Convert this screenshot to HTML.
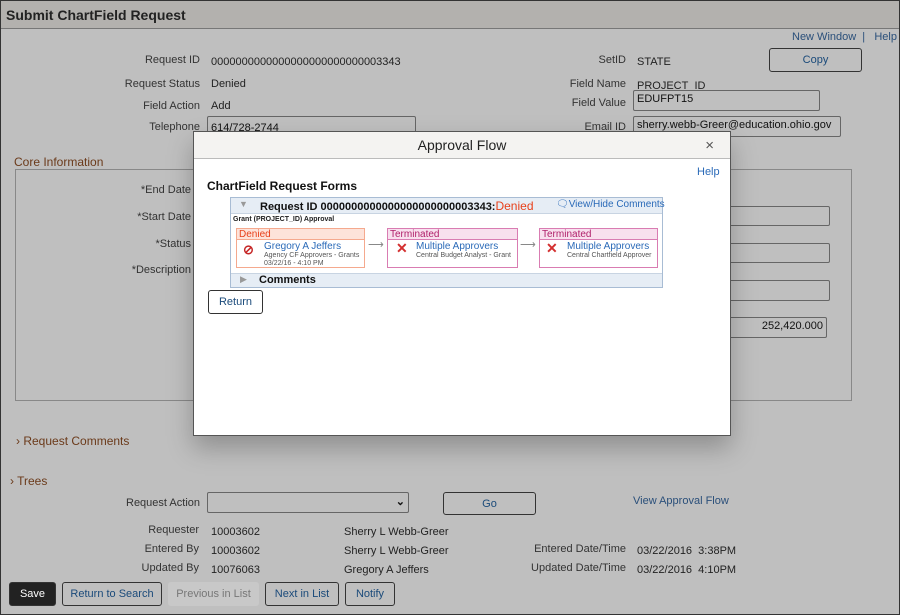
<!DOCTYPE html>
<html><head><meta charset="utf-8"><style>
*{box-sizing:border-box;margin:0;padding:0}
body{width:900px;height:615px;overflow:hidden;background:#bfbfbf;font-family:"Liberation Sans",Arial,sans-serif;font-size:11px;color:#222;position:relative}
.a{position:absolute;white-space:nowrap}
.frame{position:absolute;left:0;top:0;width:900px;height:615px;border:1px solid #333;z-index:5;pointer-events:none}
.tb{position:absolute;left:1px;top:1px;width:898px;height:28px;background:#b3b1ae;border-bottom:1px solid #777}
.lbl{position:absolute;text-align:right;color:#333}
.inp{position:absolute;border:1px solid #666;border-radius:2px;background:#bfbfbf;padding:2px 3px;font-size:11px;color:#111}
.btn{position:absolute;border:1px solid #333;border-radius:3px;text-align:center;color:#1a4a7a;font-size:11px}
.lnk{color:#2a4f7a}
.br{color:#6b3a1a;font-size:12px}
.m{position:absolute;left:193px;top:131px;width:538px;height:305px;background:#fff;border:1px solid #555;box-shadow:0 12px 24px rgba(0,0,0,.25)}
.mh{height:27px;background:#f4f3f1;border-bottom:1px solid #bbb;text-align:center;font-size:14px;line-height:27px;color:#222}
.step{position:absolute;top:14px;height:40px;background:#fff}
.step .h{height:11px;font-size:10px;line-height:11px;padding-left:2px}
.blue{color:#2a6ab8}
</style></head><body>
<div class="frame"></div>
<div class="tb"></div>
<div class="a" style="left:6px;top:7px;font-size:14px;font-weight:bold;color:#222">Submit ChartField Request</div>
<div class="a lnk" style="left:792px;top:31px">New Window &nbsp;| &nbsp; Help &nbsp;|</div>

<div class="lbl" style="left:80px;top:54px;width:120px">Request ID</div>
<div class="a" style="left:211px;top:56px">0000000000000000000000000003343</div>
<div class="lbl" style="left:80px;top:78px;width:120px">Request Status</div>
<div class="a" style="left:211px;top:78px">Denied</div>
<div class="lbl" style="left:80px;top:100px;width:120px">Field Action</div>
<div class="a" style="left:211px;top:100px">Add</div>
<div class="lbl" style="left:80px;top:121px;width:120px">Telephone</div>
<div class="inp" style="left:207px;top:116px;width:209px;height:18px;padding-top:5px">614/728-2744</div>

<div class="lbl" style="left:520px;top:54px;width:106px">SetID</div>
<div class="a" style="left:637px;top:56px">STATE</div>
<div class="btn" style="left:769px;top:48px;width:93px;height:24px;line-height:22px">Copy</div>
<div class="lbl" style="left:520px;top:78px;width:106px">Field Name</div>
<div class="a" style="left:637px;top:80px">PROJECT_ID</div>
<div class="lbl" style="left:520px;top:97px;width:106px">Field Value</div>
<div class="inp" style="left:633px;top:90px;width:187px;height:21px">EDUFPT15</div>
<div class="lbl" style="left:520px;top:121px;width:106px">Email ID</div>
<div class="inp" style="left:633px;top:116px;width:208px;height:21px">sherry.webb-Greer@education.ohio.gov</div>

<div class="a br" style="left:14px;top:155px">Core Information</div>
<div class="a" style="left:15px;top:169px;width:837px;height:232px;border:1px solid #888"></div>
<div class="lbl" style="left:80px;top:184px;width:111px">*End Date</div>
<div class="lbl" style="left:80px;top:211px;width:111px">*Start Date</div>
<div class="lbl" style="left:80px;top:238px;width:111px">*Status</div>
<div class="lbl" style="left:80px;top:264px;width:111px">*Description</div>
<div class="inp" style="left:700px;top:206px;width:130px;height:20px"></div>
<div class="inp" style="left:700px;top:243px;width:130px;height:20px"></div>
<div class="inp" style="left:700px;top:280px;width:130px;height:21px"></div>
<div class="inp" style="left:700px;top:317px;width:127px;height:21px;text-align:right">252,420.000</div>

<div class="a br" style="left:16px;top:434px">&#8250; Request Comments</div>
<div class="a br" style="left:10px;top:474px">&#8250; Trees</div>
<div class="lbl" style="left:80px;top:497px;width:120px">Request Action</div>
<div class="inp" style="left:207px;top:492px;width:202px;height:21px;text-align:right;font-weight:bold">&#8964;</div>
<div class="btn" style="left:443px;top:492px;width:93px;height:23px;line-height:22px">Go</div>
<div class="a lnk" style="left:633px;top:495px">View Approval Flow</div>
<div class="lbl" style="left:80px;top:524px;width:119px">Requester</div>
<div class="a" style="left:211px;top:526px">10003602</div>
<div class="a" style="left:344px;top:526px">Sherry L Webb-Greer</div>
<div class="lbl" style="left:80px;top:543px;width:119px">Entered By</div>
<div class="a" style="left:211px;top:545px">10003602</div>
<div class="a" style="left:344px;top:545px">Sherry L Webb-Greer</div>
<div class="lbl" style="left:500px;top:543px;width:126px">Entered Date/Time</div>
<div class="a" style="left:637px;top:545px">03/22/2016 &nbsp;3:38PM</div>
<div class="lbl" style="left:80px;top:562px;width:119px">Updated By</div>
<div class="a" style="left:211px;top:564px">10076063</div>
<div class="a" style="left:344px;top:564px">Gregory A Jeffers</div>
<div class="lbl" style="left:500px;top:562px;width:126px">Updated Date/Time</div>
<div class="a" style="left:637px;top:564px">03/22/2016 &nbsp;4:10PM</div>

<div class="btn" style="left:9px;top:582px;width:47px;height:24px;line-height:22px;background:#222;color:#fff">Save</div>
<div class="btn" style="left:62px;top:582px;width:100px;height:24px;line-height:22px">Return to Search</div>
<div class="btn" style="left:168px;top:582px;width:91px;height:24px;line-height:22px;background:#c8c8c8;border-color:#c8c8c8;color:#777">Previous in List</div>
<div class="btn" style="left:265px;top:582px;width:74px;height:24px;line-height:22px">Next in List</div>
<div class="btn" style="left:345px;top:582px;width:50px;height:24px;line-height:22px">Notify</div>

<div class="m">
 <div class="mh">Approval Flow<span style="position:absolute;right:16px;font-size:15px;color:#555">&#215;</span></div>
 <div class="a blue" style="left:503px;top:34px">Help</div>
 <div class="a" style="left:13px;top:47px;font-size:12px;font-weight:bold;color:#111">ChartField Request Forms</div>
 <div class="a" style="left:36px;top:65px;width:433px;height:91px;border:1px solid #a8bcd4;background:#fff">
  <div style="height:16px;background:#e6edf5;border-bottom:1px solid #c8d4e2;position:relative">
   <span class="a" style="left:8px;top:1px;color:#999;font-size:9px">&#9660;</span>
   <span class="a" style="left:29px;top:1px;font-size:11px;font-weight:bold;color:#111">Request ID 0000000000000000000000003343:<span style="color:#e8401a;font-weight:normal;font-size:12px">Denied</span></span>
   <span class="a blue" style="left:325px;top:1px;font-size:10px">&#128488;View/Hide Comments</span>
  </div>
  <div class="a" style="left:2px;top:18px;font-size:7px;font-weight:bold">Grant (PROJECT_ID) Approval</div>
  <div style="position:absolute;left:0;top:16px;width:431px">
  <div class="step" style="left:5px;width:129px;border:1px solid #f5a98e"><div class="h" style="background:#fde3da;color:#e8401a;border-bottom:1px solid #f5a98e">Denied</div>
   <span class="a" style="left:6px;top:13px;color:#c62828;font-size:13px;font-weight:bold">&#8856;</span>
   <span class="a blue" style="left:27px;top:12px;font-size:10px">Gregory A Jeffers</span>
   <span class="a" style="left:27px;top:23px;font-size:7px;color:#555">Agency CF Approvers - Grants</span>
   <span class="a" style="left:27px;top:31px;font-size:7px;color:#555">03/22/16 - 4:10 PM</span></div>
  <span class="a" style="left:137px;top:24px;color:#888">&#10230;</span>
  <div class="step" style="left:156px;width:131px;border:1px solid #d97cb2"><div class="h" style="background:#f8e0ee;color:#b0206a;border-bottom:1px solid #d97cb2">Terminated</div>
   <span class="a" style="left:8px;top:11px;color:#d32f2f;font-size:14px;font-weight:bold">&#10005;</span>
   <span class="a blue" style="left:28px;top:12px;font-size:10px">Multiple Approvers</span>
   <span class="a" style="left:28px;top:23px;font-size:7px;color:#555">Central Budget Analyst - Grant</span></div>
  <span class="a" style="left:289px;top:24px;color:#888">&#10230;</span>
  <div class="step" style="left:308px;width:119px;border:1px solid #d97cb2"><div class="h" style="background:#f8e0ee;color:#b0206a;border-bottom:1px solid #d97cb2">Terminated</div>
   <span class="a" style="left:6px;top:11px;color:#d32f2f;font-size:14px;font-weight:bold">&#10005;</span>
   <span class="a blue" style="left:27px;top:12px;font-size:10px">Multiple Approvers</span>
   <span class="a" style="left:27px;top:23px;font-size:7px;color:#555">Central Chartfield Approver</span></div>
  </div>
  <div class="a" style="left:0;top:75px;width:431px;height:14px;background:#e6edf5;border-top:1px solid #c8d4e2">
   <span class="a" style="left:9px;top:0;color:#999;font-size:9px">&#9654;</span>
   <span class="a" style="left:28px;top:0;font-size:11px;font-weight:bold;color:#111">Comments</span></div>
 </div>
 <div class="btn" style="left:14px;top:158px;width:55px;height:24px;line-height:22px;border-color:#333">Return</div>
</div>
</body></html>
